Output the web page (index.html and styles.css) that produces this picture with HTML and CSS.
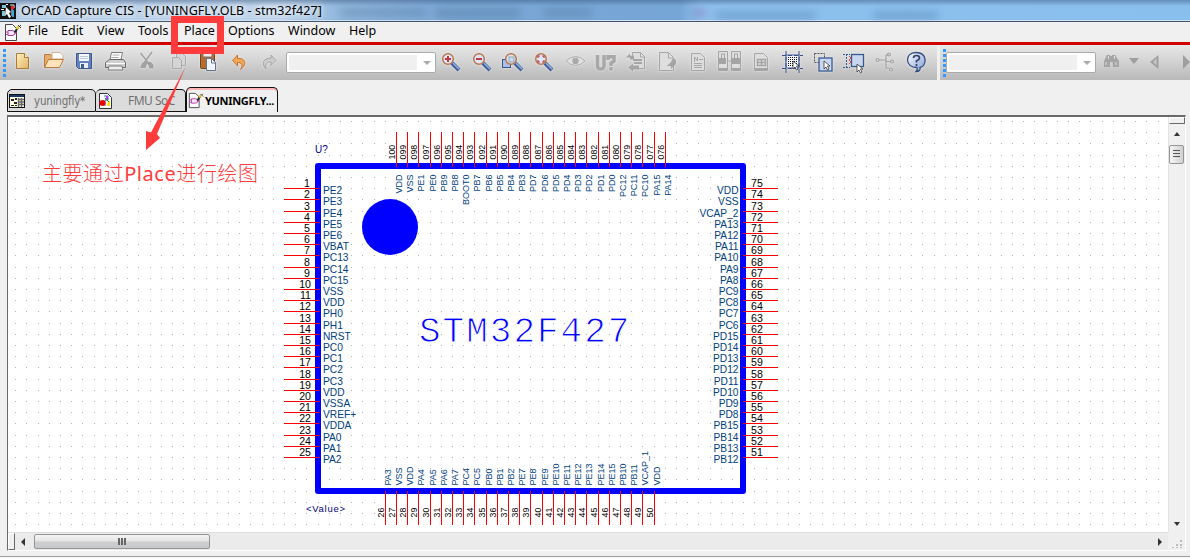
FILE: index.html
```html
<!DOCTYPE html>
<html lang="zh">
<head>
<meta charset="utf-8">
<title>OrCAD Capture CIS</title>
<link rel="stylesheet" href="styles.css">
</head>
<body>
<div class="window">
  <header class="titlebar">
    <svg class="app-icon" width="16" height="18" viewBox="0 0 16 18"><rect y="1" width="16" height="16" fill="#111"/><path d="M2 3h4v3H2zM2 9h3v5H2z" fill="#7fc4d8"/><path d="M6 5l5 5-2 1 2 4-2 1-2-4-2 2z" fill="#fff"/><path d="M10 3h4v3h-2v8" fill="none" stroke="#e8e8f4"/><path d="M11 4h3v3h-3z" fill="#e22"/><path d="M13 8v7" stroke="#38a8d8" stroke-width="2"/><path d="M1 7h3v1H1zM6 2h2v1H6z" fill="#fff"/></svg>
    <span class="title">OrCAD Capture CIS - [YUNINGFLY.OLB - stm32f427]</span>
    <span class="glass"></span>
  </header>
  <nav class="menubar">
    <svg class="doc-icon" width="18" height="19" viewBox="0 0 18 19"><use href="#docpen"/></svg>
    <span class="m-file">File</span><span class="m-edit">Edit</span><span class="m-view">View</span><span class="m-tools">Tools</span><span class="m-place">Place</span><span class="m-options">Options</span><span class="m-window">Window</span><span class="m-help">Help</span>
  </nav>
  <div class="toolbars">
    <div class="toolbar main">
      <i class="grip"></i>
      <svg class="ic" viewBox="0 0 31 34"><path d="M9.500 8.500h8l4 4v11h-12z" fill="url(#tan)" stroke="#a87c3a"/><path d="M17.500 8.500v4h4" fill="#fff3cf" stroke="#a87c3a"/></svg>
      <svg class="ic" viewBox="0 0 31 34"><path d="M6.500 22V9.500h6l2 2h8V15" fill="#e8ac6a" stroke="#b87a3c"/><path d="M14 7.500h8l3 3V14H14z" fill="#fff" stroke="#c9a077" stroke-width=".8"/><path d="M6.500 22.500l4-8h15l-4 8z" fill="#ffe3ba" stroke="#b87a3c"/></svg>
      <svg class="ic" viewBox="0 0 31 34"><path d="M7.500 8.500h15v15h-13l-2-2z" fill="#6281be" stroke="#3d568f"/><path d="M10 9h10v7H10z" fill="#f5f7fc"/><path d="M11 11.500h8M11 13.500h8" stroke="#bec9dd"/><path d="M11 18h8v5h-8z" fill="#e9edf5"/><path d="M12 19h3v4h-3z" fill="#465c88"/></svg>
      <svg class="ic" viewBox="0 0 31 34"><path d="M11.500 7.500h11l-2 9h-11z" fill="#fff" stroke="#777"/><path d="M12.500 10h7m-8 2.500h7" stroke="#aaa"/><path d="M5.500 17.500l4-3h14l2 3v5h-20z" fill="#cfcfcf" stroke="#666"/><path d="M6 18.500h19" stroke="#fff"/><path d="M9 21h13l1 4H8z" fill="#eee" stroke="#777"/></svg>
      <svg class="ic g" viewBox="0 0 31 34"><path d="M9.500 8l8 10M21 7l-8 11" stroke="#a2a2a2" stroke-width="1.600"/><path d="M9 23l2-5 4-2 2 2-3 5zM16 17l4 0 2.500 3v3.500h-4z" fill="#a2a2a2"/></svg>
      <svg class="ic g" viewBox="0 0 31 34"><path d="M14.500 8.500h6l3 3v9h-9z" fill="#d5d5d5" stroke="#aaa"/><path d="M10.500 12.500h6l3 3v8h-9z" fill="#d5d5d5" stroke="#aaa"/></svg>
      <svg class="ic" viewBox="0 0 31 34"><rect x="7.500" y="8.500" width="14" height="15" rx="1" fill="#b76b2e" stroke="#73441f"/><rect x="10" y="7" width="9" height="5" rx="1" fill="#eee" stroke="#777"/><path d="M13.500 13.500h5l4 4v8h-9z" fill="#f1f5fb" stroke="#60738c"/><path d="M18.500 14v4h4" fill="none" stroke="#60738c"/></svg>
      <svg class="ic" viewBox="0 0 31 34"><path d="M8.500 15.500l5-5.500v3.500c8-1 10 6 3 11 3-5 1-7-3-7v3.500z" fill="#f2a654" stroke="#bb6a25" stroke-width=".9"/></svg>
      <svg class="ic g" viewBox="0 0 31 34"><path d="M21 15.500l-5-5.500v3c-8 0-10 6-5 11-1-5 1-7 5-7v3.500z" fill="#ccc" stroke="#a2a2a2"/></svg>
      <div class="combo"><span class="field"></span><i class="caret"></i></div>
      <svg class="ic" viewBox="0 0 31 34"><use href="#lens"/><path d="M9 14h6M12 11v6" stroke="#b73d42" stroke-width="2"/></svg>
      <svg class="ic" viewBox="0 0 31 34"><use href="#lens"/><path d="M9 14h6" stroke="#b73d42" stroke-width="2"/></svg>
      <svg class="ic" viewBox="0 0 31 34"><rect x="4.500" y="14.500" width="8" height="8" fill="#aabfe3" stroke="#34558e"/><use href="#lens" x="1"/><rect x="11" y="12" width="5" height="5" fill="#cddafd" stroke="#8aa"/></svg>
      <svg class="ic" viewBox="0 0 31 34"><use href="#lens"/><path d="M9 13v-2h2M13 11h2v2M9 15v2h2M13 17h2v-2" fill="none" stroke="#b73d42" stroke-width="1.200"/></svg>
      <svg class="ic g" viewBox="0 0 31 34"><path d="M6 16q4-4.500 9.500-4.500T25 16q-4 4.500-9.500 4.500T6 16z" fill="#e0e0e0" stroke="#aaa"/><circle cx="15.500" cy="16" r="3.200" fill="#aaa"/></svg>
      <svg class="ic g" viewBox="0 0 31 34"><path d="M6.500 10v11q0 3 3 3t3.500-3V10" fill="none" stroke="#a8a8a8" stroke-width="3.500"/><path d="M17 15v-3.300h6v4.300l-3 2V21M20 22v3.500" fill="none" stroke="#a8a8a8" stroke-width="3.500"/></svg>
      <svg class="ic g" viewBox="0 0 31 34"><path d="M10.500 10.500v-3h8l4 4v12h-8M18.500 8v4h4" fill="#ddd" stroke="#a5a5a5"/><path d="M11 15h9M12 18h8" stroke="#a5a5a5" stroke-width="2"/><path d="M4 12.500l4-4v2h4v4H8v-2zM6 22.500l5-4v2h6v4h-6v2z" fill="#a5a5a5"/></svg>
      <svg class="ic g" viewBox="0 0 31 34"><path d="M6.500 7.500h9l5 5v13h-14zM15.500 8v5h5" fill="#dedede" stroke="#a5a5a5"/><path d="M20 13l3 2v4l-5 5v-3h-4l4-4z" fill="#a5a5a5"/></svg>
      <svg class="ic g" viewBox="0 0 31 34"><path d="M7.500 8.500h9l4 4v13h-13z" fill="#dedede" stroke="#a5a5a5"/><path d="M10.500 17v-5l3 4v-4M15 14.500h4M10 18.500h8M10 20.500h8M10 22.500h8" fill="none" stroke="#a5a5a5"/></svg>
      <svg class="ic g" viewBox="0 0 31 34"><path d="M3.500 6.500h9v19h-9zM16.500 6.500h9v19h-9z" fill="#dedede" stroke="#a5a5a5"/><path d="M4 13h7v6H4zM17 13h8v6h-8zM4 23h8v3H4zM17 23h8v3h-8z" fill="#a5a5a5"/><path d="M6.500 13v-4h3v10M19.500 13v-4h3v10M12 16h4" fill="none" stroke="#a5a5a5"/></svg>
      <svg class="ic g" viewBox="0 0 31 34"><path d="M8.500 8.500h9l4 4v13h-13z" fill="#dedede" stroke="#a5a5a5"/><path d="M9 23h12v3H9z" fill="#a5a5a5"/><path d="M11.500 14.500h8v6h-8zM11.500 17.500h8M15.500 14v7" fill="none" stroke="#a5a5a5" stroke-width="1.500"/></svg>
      <svg class="ic" viewBox="0 0 31 34"><path d="M9 10h13v13H9z" fill="#f4f5ff" stroke="#425f98" stroke-width="1.200"/><path d="M5 10.500h21M5 23.500h21M9 6v22M22 6v22" stroke="#3a4f85" stroke-dasharray="4 2"/><path d="M11 12.500h10M11 14.500h10M11 16.500h10M11 18.500h10M11 20.500h10" stroke="#111" stroke-dasharray="1 1"/><use href="#pointer" x="16" y="16"/></svg>
      <svg class="ic" viewBox="0 0 31 34"><rect x="6.500" y="8.500" width="10" height="9" fill="none" stroke="#555" stroke-dasharray="2 1"/><rect x="11" y="13" width="13" height="13" fill="#c8d7ef" stroke="#35588f" stroke-width="1.300"/><use href="#pointer" x="16" y="16"/></svg>
      <svg class="ic" viewBox="0 0 31 34"><path d="M4 9.500h7M4 22.500h7M7.500 9v14" stroke="#38578e" stroke-dasharray="2 1"/><path d="M10 11l2 2-2 2 2 2-2 2" fill="none" stroke="#e54545"/><rect x="12.500" y="9.500" width="12" height="12" fill="#c8d7ef" stroke="#35588f" stroke-width="1.300"/><use href="#pointer" x="18" y="19"/></svg>
      <svg class="ic g" viewBox="0 0 31 34"><g fill="none" stroke="#a0a0a0" stroke-width="1.200"><path d="M9 15h7M19 10h-3v13h3M16 16.500h4"/><circle cx="7.500" cy="15" r="1.500"/><circle cx="19" cy="9.500" r="1.500"/><circle cx="22" cy="16.500" r="1.500"/><circle cx="21" cy="24.500" r="1.500"/></g></svg>
      <svg class="ic" viewBox="0 0 31 34"><path d="M15 7.500c12 0 11 14 4 15q1 4-4 4 2-2 1-4C4 23 3 7.500 15 7.500z" fill="url(#help)" stroke="#334c80" stroke-width="1.300"/><path d="M12.500 13q0-2.500 3-2.500t3 2.500q0 1.500-3 3v1.500M15.500 19v2" stroke="#334264" stroke-width="1.700" fill="none"/></svg>
    </div>
    <div class="toolbar search">
      <i class="grip"></i>
      <div class="combo"><span class="field"></span><i class="caret"></i></div>
      <svg class="find" width="94" height="34" viewBox="0 0 94 34"><path d="M8 22v-6l3-6h3v12zM16 10h3l4 6v6h-6zM12 11h7v6h-7z" fill="#a5a5a5"/><path d="M10 17v3M20 17v3M12.500 11v3M18.500 11v3" stroke="#ddd"/><path d="M33 13h10l-5 6zM62.500 10v14L54 17zM87 10v14l7-7z" fill="#9f9f9f"/><path d="M60.500 13v7.500L57 17z" fill="#c5c5c5"/></svg>
    </div>
  </div>
  <div class="tabs">
    <div class="tab t1"><svg width="16" height="14" viewBox="0 0 16 14"><rect x=".5" y=".5" width="15" height="13" fill="#fdfbe0" stroke="#111"/><path d="M1 1h14v2H1z" fill="#163c66"/><path d="M2 5h3v2H2zM5 8h3v2H5zM2 11h3v1H2zM6 4h2v2H6zM6 11h2v1H6z" fill="#222"/><path d="M9.500 4v9M12.500 4v9M10 5.500h5M10 8h5M10 10.500h5" stroke="#666" stroke-width="1.400"/></svg><span>yuningfly*</span></div>
    <div class="tab t2"><svg width="13" height="16" viewBox="0 0 13 16"><path d="M.5.500h8l4 4v11H.5z" fill="#fff" stroke="#333"/><path d="M5 3h4v4H6v6" fill="none" stroke="#36c"/><circle cx="3.500" cy="10" r="3" fill="#e00"/><path d="M7 3h2v4H7z" fill="#a4e"/><path d="M9 8h2v5H8z" fill="#fd0"/><path d="M6 5l4 4" stroke="#090"/></svg><span>FMU SoC</span></div>
    <div class="tab t3"><svg width="16" height="17" viewBox="0 0 18 19"><use href="#docpen"/></svg><span>YUNINGFLY...</span></div>
  </div>
  <main class="workspace">
    <div class="canvas"></div>
    <div class="vscroll"><i class="split"></i><i class="up"></i><i class="vthumb"></i><i class="down"></i></div>
    <div class="hscroll"><i class="hsplit"></i><i class="left"></i><i class="hthumb"></i><i class="right"></i></div>
    <svg class="corner" viewBox="0 0 17 18"><path d="M12 8h2v2h-2zM8 12h2v2H8zM12 12h2v2h-2zM4 15h2v1H4zM8 15h2v1H8zM12 15h2v1h-2z" fill="#bbb"/></svg>
  </main>
  <footer class="status"></footer>
  <svg class="drawing" width="1190" height="559" viewBox="0 0 1190 559">
    <defs>
      <linearGradient id="tan" x2="1" y2="1"><stop stop-color="#fff0bd"/><stop offset="1" stop-color="#e1b565"/></linearGradient>
      <linearGradient id="help" x2="1" y2="1"><stop stop-color="#fff"/><stop offset="1" stop-color="#7e9ad8"/></linearGradient>
      <g id="lens"><path d="M16 18l7 7" stroke="#3f5f9c" stroke-width="4"/><path d="M17 18l6 6" stroke="#9ab1db" stroke-width="1.500"/><circle cx="12" cy="14" r="5.300" fill="#dde6fa" stroke="#b9754a" stroke-width="1.500"/></g>
      <path id="pointer" d="M0 0v8l2-2 1.500 3 1.500-1-1.500-3H6z" fill="#fff" stroke="#333" stroke-width=".8"/>
      <g id="docpen"><path d="M1.500 1.500h7l4 4v12h-11z" fill="#fff" stroke="#444"/><path d="M4 7.500h4q3 0 3 2.500t-3 2.500H4z" fill="#fbe6fb" stroke="#b23aa4"/><path d="M2 9h2M2 11.500h2M11 10h2" stroke="#b23aa4"/><path d="M10.500 9.500l3.500-5" stroke="#222" stroke-width="2"/><path d="M12.500 6l2.500-3" stroke="#e6cd22" stroke-width="2"/><path d="M14 2l3 3M17 2l-1 1" stroke="#333"/></g>
    </defs>
    <g id="dots" fill="#b4b4b4" shape-rendering="crispEdges"></g>
    <rect x="318" y="166" width="425" height="325" fill="none" stroke="#00f" stroke-width="6" stroke-linejoin="round"/>
    <circle cx="390" cy="227" r="28" fill="#00f"/>
    <g id="pins"></g>
    <text class="label" x="315" y="153">U?</text>
    <text class="label value" x="306" y="512" textLength="39">&lt;Value&gt;</text>
    <text class="part" x="419" y="342">STM32F427</text>
    <text class="note" x="42" y="181" textLength="216">主要通过<tspan class="latin">Place</tspan>进行绘图</text>
    <rect x="174.500" y="19.500" width="46" height="31" fill="none" stroke="#ff3b3b" stroke-width="7"/>
    <path d="M185.500 67L157 134l3 4-14 12v-19l5 1.500z" fill="#ff3b3b"/>
  </svg>
</div>
<script src="pins.js"></script>
</body>
</html>
```
FILE: styles.css
```css
* { box-sizing: border-box; }
body { margin: 0; overflow: hidden; background: #f0f0f0; font-family: "Noto Sans", "Noto Sans CJK SC", sans-serif; font-size: 12.5px; color: #000; }
i { display: block; }
.window { position: relative; width: 1190px; height: 559px; display: flex; flex-direction: column; }
.titlebar { height: 22px; flex: none; display: flex; align-items: center; overflow: hidden; background: linear-gradient(180deg, rgba(50,80,120,.45), rgba(255,255,255,0) 6px), linear-gradient(90deg, #b5cce6 0, #bdd3ea 280px, #94b9df 335px, #7ba7d5 450px, #76a6d6 680px, #8dc0ec 700px, #89bfed); border-bottom: 1px solid #48566c; box-shadow: inset 0 -1px #cfe3f7; }
.app-icon { margin-top: 1px; flex: none; }
.title { margin-left: 5px; width: 302px; flex: none; white-space: nowrap; letter-spacing: .05px; text-shadow: 0 0 5px #fff, 0 0 8px #fff; }
.glass { width: 860px; height: 20px; background: linear-gradient(#45698f, #45698f) 18px 8px/85px 7px no-repeat, linear-gradient(#45698f, #45698f) 112px 8px/85px 8px no-repeat, linear-gradient(#45698f, #45698f) 220px 8px/48px 7px no-repeat, linear-gradient(#844e9d, #844e9d) 371px 8px/11px 8px no-repeat, linear-gradient(#456e9d, #456e9d) 393px 11px/100px 7px no-repeat, linear-gradient(#456e9d, #456e9d) 550px 11px/65px 7px no-repeat; filter: blur(4px); opacity: .4; }
.menubar { height: 20px; flex: none; display: flex; align-items: center; line-height: 18px; white-space: nowrap; }
.doc-icon { margin-left: 4px; flex: none; }
.menubar span { height: 20px; flex: none; }
.m-file { margin-left: 6px; width: 33px; }
.m-edit { width: 36px; }
.m-view { width: 41px; }
.m-tools { width: 46px; }
.m-place { width: 44px; }
.m-options { width: 60px; }
.m-window { width: 61px; }
.toolbars { height: 38px; flex: none; display: flex; border-top: 3px solid #d10000; background: #f0f0f0; }
.toolbar { height: 35px; display: flex; background: linear-gradient(#e7e7e7, #d4d4d4 45%, #b8b8b8); }
.main { width: 937px; }
.search { margin-left: 3px; width: 250px; padding-left: 3px; }
.grip { width: 3px; height: 28px; margin: 4px 1px 0 3px; flex: none; background: repeating-linear-gradient(#3399ff 0 3px, transparent 3px 5px); }
.search .grip { margin-left: 0; margin-right: 0; }
.ic { width: 31px; height: 34px; flex: none; filter: drop-shadow(0 0 1px #eee); }
.combo { width: 150px; height: 21px; margin: 7px 0 0 0; flex: none; border: 1px solid #aaa; border-radius: 2px; background: #fff; display: flex; align-items: center; }
.field { height: 15px; width: 128px; margin-left: 2px; background: #f0f0f0; }
.caret { margin-left: 6px; border: 4px solid transparent; border-top-color: #aaa; border-bottom: 0; }
.find { flex: none; }
.tabs { height: 35px; flex: none; display: flex; align-items: flex-start; padding: 7px 0 0 7px; }
.tab { display: flex; align-items: center; border: 1px solid #111; border-radius: 5px 5px 0 0; background: #dcdcdc; color: #707070; font-size: 12px; height: 23px; margin-top: 2px; white-space: nowrap; flex: none; }
.tab svg { flex: none; }
.t1 { width: 89px; padding-left: 1px; }
.t1 span { margin-left: 9px; font-family: "DejaVu Sans Condensed", sans-serif; font-size: 11.5px; letter-spacing: -.2px; }
.t2 { width: 90px; border-left: 0; padding-left: 3px; }
.t2 span { margin-left: 16px; letter-spacing: -.5px; }
.t3 { width: 92px; height: 25px; margin-top: 0; background: #f0f0f0; border-bottom: 0; color: #000; font-weight: bold; box-shadow: inset 0 2px #ffb5b5; font-size: 11px; padding-left: 1px; }
.t3 span { letter-spacing: -.3px; margin-left: 1px; }
.workspace { width: 1179px; height: 436px; flex: none; margin-left: 7px; display: grid; grid-template-columns: 1160px 17px; grid-template-rows: 415px 18px; border: 1px solid #fff; border-top: 2px solid #696969; border-left-color: #696969; }
.canvas { background: #fff; }
.vscroll { background: #f0f0f0; border-left: 1px solid #e3e3e3; display: flex; flex-direction: column; align-items: center; }
.split { width: 16px; height: 7px; background: #f0f0f0; border: 1px solid #fff; border-right: 1px solid #696969; border-bottom: 1px solid #696969; }
.up { margin-top: 8px; border: 3.500px solid transparent; border-top: 0; border-bottom: 4px solid #333; }
.vthumb { width: 15px; height: 19px; margin-top: 9px; margin-right: 1px; border: 1px solid #959595; border-radius: 2px; background: linear-gradient(#555, #555) 3px 4px/7px 1px no-repeat, linear-gradient(#555, #555) 3px 7px/7px 1px no-repeat, linear-gradient(#555, #555) 3px 10px/7px 1px no-repeat, linear-gradient(90deg, #f5f5f5, #d0d0d0); }
.down { margin-top: auto; margin-bottom: 6px; border: 3.500px solid transparent; border-bottom: 0; border-top: 4px solid #333; }
.hscroll { background: #ebebeb; border-top: 1px solid #dedede; display: flex; align-items: center; }
.hsplit { width: 7px; height: 17px; background: #f0f0f0; border: 1px solid #fff; border-right-color: #696969; border-bottom-color: #696969; }
.left { margin-left: 6px; border: 4px solid transparent; border-left: 0; border-right-color: #333; }
.hthumb { width: 176px; height: 15px; margin-left: 9px; border: 1px solid #959595; border-radius: 2px; background: linear-gradient(90deg, #666 2px, transparent 2px 3px, #666 3px 5px, transparent 5px 6px, #666 6px 8px, transparent 8px) 83px 3px/8px 7px no-repeat, linear-gradient(#f5f5f5, #e4e4e4 48%, #cfcfcf 52%, #c5c9cd); }
.right { margin-left: auto; margin-right: 6px; border: 4px solid transparent; border-right: 0; border-left-color: #333; }
.corner { width: 17px; height: 18px; background: #f0f0f0; }
.status { margin-top: 5px; height: 3px; border-top: 1px solid #a0a0a0; background: #fafafa; }
.drawing { position: absolute; left: 0; top: 0; }
.num, .name { font-family: "Liberation Sans", Arial, sans-serif; }
.num { font-size: 10.6px; fill: #000; }
.name { font-size: 10.2px; fill: #004080; }
.vert .num { font-size: 8.8px; }
.vert .name { font-size: 9px; }
.label { font-family: "Liberation Sans", Arial, sans-serif; font-size: 10px; fill: #000080; }
.value { font-size: 9.5px; }
.part { font-family: "Courier New", "Liberation Mono", monospace; font-size: 36px; letter-spacing: 2px; fill: #00f; stroke: #fff; stroke-width: 1px; }
.note { font-family: "Noto Sans CJK SC", sans-serif; font-size: 20px; font-weight: 300; fill: #ff3b3b; }
.latin { font-family: "Noto Sans", sans-serif; font-weight: 400; }
```
FILE: pins.js
```js
const NS = "http://www.w3.org/2000/svg";
const PITCH = 11.2;
const left = "PE2 PE3 PE4 PE5 PE6 VBAT PC13 PC14 PC15 VSS VDD PH0 PH1 NRST PC0 PC1 PC2 PC3 VDD VSSA VREF+ VDDA PA0 PA1 PA2".split(" ");
const right = "VDD VSS VCAP_2 PA13 PA12 PA11 PA10 PA9 PA8 PC9 PC8 PC7 PC6 PD15 PD14 PD13 PD12 PD11 PD10 PD9 PD8 PB15 PB14 PB13 PB12".split(" ");
const topNames = "VDD VSS PE1 PE0 PB9 PB8 BOOT0 PB7 PB6 PB5 PB4 PB3 PD7 PD6 PD5 PD4 PD3 PD2 PD1 PD0 PC12 PC11 PC10 PA15 PA14".split(" ");
const bottom = "PA3 VSS VDD PA4 PA5 PA6 PA7 PC4 PC5 PB0 PB1 PB2 PE7 PE8 PE9 PE10 PE11 PE12 PE13 PE14 PE15 PB10 PB11 VCAP_1 VDD".split(" ");
const pins = document.getElementById("pins");
const dots = document.getElementById("dots");

function add(parent, tag, attrs, text) {
  const el = document.createElementNS(NS, tag);
  for (const k in attrs) el.setAttribute(k, attrs[k]);
  if (text !== undefined) el.textContent = text;
  parent.appendChild(el);
  return el;
}
function line(x, y, w, h) { add(pins, "rect", { x, y, width: w, height: h, fill: "#f00" }); }
function label(parent, cls, x, y, anchor, text, turned) {
  const attrs = turned ? { transform: `translate(${x} ${y}) rotate(-90)` } : { x, y };
  add(parent, "text", { class: cls, "text-anchor": anchor, ...attrs }, text);
}

let d = "";
for (let r = 0; r < 37; r++)
  for (let c = 0; c < 103; c++)
    d += `M${Math.floor(15.6 + c * PITCH + 0.001)} ${Math.floor(121.4 + r * PITCH + 0.001)}h1v1h-1z`;
add(dots, "path", { d });

const vert = add(pins, "g", { class: "vert" });
for (let i = 0; i < 25; i++) {
  const y = Math.floor(188.6 + i * PITCH + 0.001);
  line(284, y, 35, 1);
  line(743, y, 35, 1);
  label(pins, "num", i < 9 ? 310 : 311, y - 1, "end", i + 1);
  label(pins, "name", 323, y + 6, "start", left[i]);
  label(pins, "num", 751, y - 1, "start", 75 - i);
  label(pins, "name", 738.5, y + 6, "end", right[i]);

  const xt = Math.floor(396.4 + i * PITCH + 0.001);
  line(xt, 132, 1, 35);
  label(vert, "num", xt - 1, 159.5, "start", String(100 - i).padStart(3, "0"), true);
  label(vert, "name", xt + 6, 174.5, "end", topNames[i], true);

  const xb = Math.floor(385.2 + i * PITCH + 0.001);
  line(xb, 491, 1, 34);
  label(vert, "num", xb - 1, 517.5, "start", 26 + i, true);
  label(vert, "name", xb + 6, 485.5, "start", bottom[i], true);
}
```
